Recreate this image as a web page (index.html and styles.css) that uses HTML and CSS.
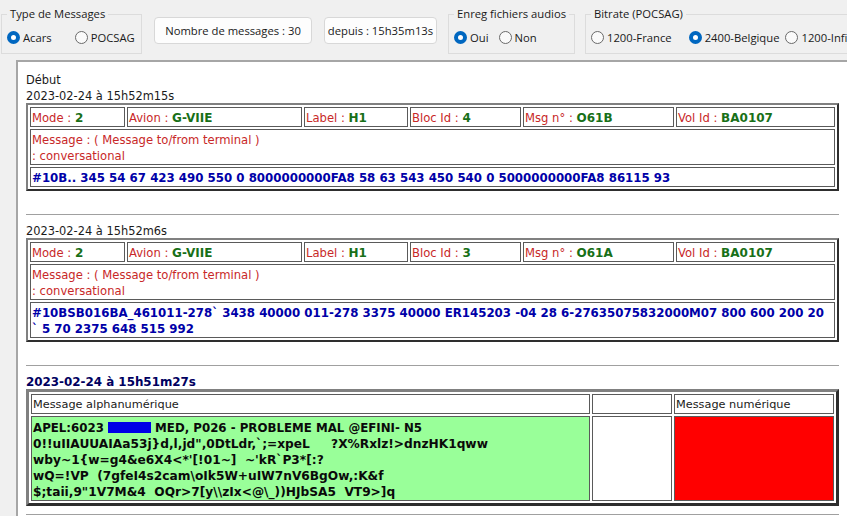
FILE: index.html
```html
<!DOCTYPE html>
<html lang="fr">
<head>
<meta charset="utf-8">
<title>Messages</title>
<link rel="stylesheet" href="styles.css">
</head>
<body>
<header class="toolbar">
  <fieldset class="group group-type">
    <legend>Type de Messages</legend>
    <label class="opt"><input type="radio" name="type" checked>Acars</label>
    <label class="opt"><input type="radio" name="type">POCSAG</label>
  </fieldset>
  <div class="stat stat-count">Nombre de messages : 30</div>
  <div class="stat stat-since">depuis : 15h35m13s</div>
  <fieldset class="group group-audio">
    <legend>Enreg fichiers audios</legend>
    <label class="opt"><input type="radio" name="audio" checked>Oui</label>
    <label class="opt"><input type="radio" name="audio">Non</label>
  </fieldset>
  <fieldset class="group group-rate">
    <legend>Bitrate (POCSAG)</legend>
    <label class="opt"><input type="radio" name="rate">1200-France</label>
    <label class="opt"><input type="radio" name="rate" checked>2400-Belgique</label>
    <label class="opt"><input type="radio" name="rate">1200-Infi</label>
  </fieldset>
</header>
<main class="frame">
  <div class="line">Début</div>
  <div class="line">2023-02-24 à 15h52m15s</div>
  <table class="msg">
    <colgroup><col class="c1"><col class="c2"><col class="c3"><col class="c4"><col class="c5"><col class="c6"></colgroup>
    <tr>
      <td>Mode : <b>2</b></td><td>Avion : <b>G-VIIE</b></td><td>Label : <b>H1</b></td>
      <td>Bloc Id : <b>4</b></td><td>Msg n° : <b>O61B</b></td><td>Vol Id : <b>BA0107</b></td>
    </tr>
    <tr><td colspan="6">Message : ( Message to/from terminal )<br>: conversational</td></tr>
    <tr><td colspan="6" class="body">#10B.. 345 54 67 423 490 550 0 8000000000FA8 58 63 543 450 540 0 5000000000FA8 86115 93</td></tr>
  </table>
  <hr>
  <div class="line">2023-02-24 à 15h52m6s</div>
  <table class="msg">
    <colgroup><col class="c1"><col class="c2"><col class="c3"><col class="c4"><col class="c5"><col class="c6"></colgroup>
    <tr>
      <td>Mode : <b>2</b></td><td>Avion : <b>G-VIIE</b></td><td>Label : <b>H1</b></td>
      <td>Bloc Id : <b>3</b></td><td>Msg n° : <b>O61A</b></td><td>Vol Id : <b>BA0107</b></td>
    </tr>
    <tr><td colspan="6">Message : ( Message to/from terminal )<br>: conversational</td></tr>
    <tr><td colspan="6" class="body">#10BSB016BA_461011-278` 3438 40000 011-278 3375 40000 ER145203 -04 28 6-27635075832000M07 800 600 200 20<br>` 5 70 2375 648 515 992</td></tr>
  </table>
  <hr>
  <div class="line line-strong">2023-02-24 à 15h51m27s</div>
  <table class="msg pocsag">
    <colgroup><col class="p1"><col class="p2"><col class="p3"></colgroup>
    <tr><td>Message alphanumérique</td><td></td><td>Message numérique</td></tr>
    <tr class="data">
      <td class="alpha"><span class="head">APEL:6023 <span class="mask"></span> MED, P026 - PROBLEME MAL @EFINI- N5</span><br>0!!uIIAUUAIAa53j}d,l,jd",0DtLdr,`;=xpeL &nbsp;&nbsp;&nbsp; ?X%Rxlz!&gt;dnzHK1qww<br>wby~1{w=g4&amp;e6X4&lt;*'[!01~] &nbsp;~'kR`P3*[:?<br>wQ=!VP &nbsp;(7gfeI4s2cam\oIk5W+uIW7nV6BgOw,:K&amp;f<br>$;taii,9"1V7M&amp;4 &nbsp;OQr&gt;7[y\\zIx&lt;@\_))HJbSA5 &nbsp;VT9&gt;]q</td>
      <td></td>
      <td class="num"></td>
    </tr>
  </table>
  <hr class="last">
</main>
</body>
</html>
```
FILE: styles.css
```css
* { box-sizing: border-box; }
html, body { margin: 0; height: 100%; overflow: hidden; }
body {
  width: 847px;
  height: 516px;
  background: #f0f0f0;
  color: #1a1a1a;
  font: 11.25px "Open Sans", "Noto Sans", sans-serif;
}
.toolbar {
  display: flex;
  align-items: flex-start;
  height: 60px;
  padding: 6px 0 0 1px;
  white-space: nowrap;
}
.group {
  margin: 0;
  padding: 0 0 0 5px;
  height: 48px;
  border: 1px solid #dcdcdc;
  display: flex;
  align-items: center;
  flex: none;
}
.group legend { padding: 0 3px; margin: 0; line-height: 16px; }
.group-type { width: 141px; gap: 23px; }
.group-audio { width: 127px; margin-left: 11px; gap: 10px; }
.group-rate { width: 261px; margin-left: 10px; }
.group-rate .opt:nth-child(3) { margin-left: 17px; }
.group-rate .opt:nth-child(4) { margin-left: 6px; }
.opt { display: flex; align-items: center; gap: 3px; }
.opt input {
  appearance: none;
  margin: 0;
  width: 13px;
  height: 13px;
  border: 1px solid #6a6a6a;
  border-radius: 50%;
  background: #fafafa;
  flex: none;
}
.opt input:checked { border: 4px solid #0067c0; background: #fff; }
.stat {
  flex: none;
  height: 27px;
  margin-top: 11px;
  background: #fdfdfd;
  border: 1px solid #d8d8d8;
  border-radius: 4px;
  display: flex;
  align-items: center;
  justify-content: center;
}
.stat-count { width: 158px; margin-left: 12px; }
.stat-since { width: 113px; margin-left: 12px; }
.frame {
  margin-left: 16px;
  height: 456px;
  background: #fff;
  border-left: 2px solid #a6a6a6;
  border-top: 2px solid #a6a6a6;
  padding: 9px 0 0 8px;
  overflow: hidden;
  font-family: "DejaVu Sans", Verdana, sans-serif;
  font-size: 11.4px;
}
.line { height: 16px; padding-top: 1px; line-height: 16px; color: #1a1a1a; }
.line-strong { font-size: 11.9px; font-weight: bold; color: #000060; }
.msg {
  width: 813px;
  table-layout: fixed;
  border-collapse: separate;
  border-spacing: 2px;
  border-width: 2px;
  border-style: solid;
  border-color: #808080 #2e2e2e #2e2e2e #808080;
  font-size: 11.6px;
}
.msg td {
  border: 1px solid #5a5a5a;
  padding: 2px 1px 0;
  line-height: 16px;
  color: #c82828;
  height: 20px;
  white-space: nowrap;
}
.msg b { font-size: 12px; color: #187018; }
.msg td.body { font-size: 11.8px; color: #0000a8; font-weight: bold; }
.c1 { width: 95px; }
.c2 { width: 175px; }
.c3 { width: 104px; }
.c4 { width: 111px; }
.c5 { width: 151px; }
.pocsag { border-width: 3px; }
.msg.pocsag td { font-size: 11.3px; color: #1a1a1a; }
.p1 { width: 559px; }
.p2 { width: 80px; }
.pocsag .data td { height: 84px; vertical-align: top; }
.msg.pocsag td.alpha { font-size: 12.2px; background: #99ff99; color: #0a0a0a; font-weight: bold; padding-top: 3px; }
.msg td.num { background: #ff0000; }
.head { font-size: 11.8px; }
.mask { display: inline-block; width: 43px; height: 11px; background: #0000e6; vertical-align: -1px; }
hr {
  width: 813px;
  height: 1px;
  margin: 23px 0 7px;
  border: 0;
  background: #a0a0a0;
}
hr.last { margin-top: 8px; }
```
